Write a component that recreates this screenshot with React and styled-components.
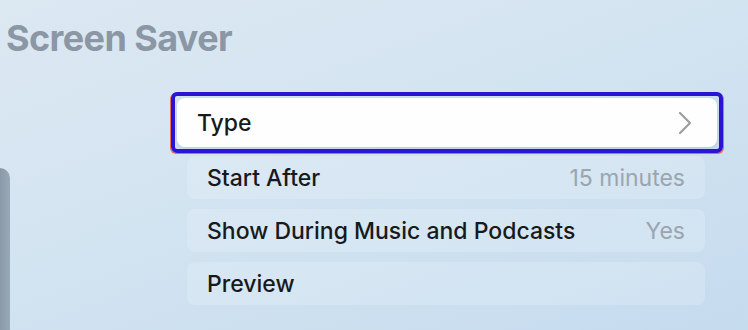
import React from 'react'
import styled, { createGlobalStyle } from 'styled-components'

const GlobalStyle = createGlobalStyle`
  html, body {
    margin: 0;
    padding: 0;
  }
  body {
    font-family: 'Inter', 'Liberation Sans', sans-serif;
  }
`

const Page = styled.div`
  width: 748px;
  height: 330px;
  overflow: hidden;
  background: linear-gradient(160deg, #dce8f2 0%, #d3e4f1 45%, #c5dbee 100%);
  display: grid;
  grid-template-rows: auto 1fr;
`

const Title = styled.h1`
  margin: 0;
  padding: 16px 0 0 6px;
  height: 76px;
  box-sizing: border-box;
  font-size: 36px;
  font-weight: 700;
  letter-spacing: -0.6px;
  color: #8b97a4;
`

const Body = styled.div`
  display: flex;
`

const Side = styled.div`
  width: 171px;
  flex-shrink: 0;
`

// edge of the Apple TV box peeking in from the left
const Device = styled.div`
  margin-top: 92px;
  width: 10px;
  height: 200px;
  background: linear-gradient(90deg, #8a9aa8, #97a8b6);
  border-top-right-radius: 14px;
`

const List = styled.ul`
  list-style: none;
  margin: 16px 0 0;
  padding: 0;
  width: 552px;
  display: flex;
  flex-direction: column;
  gap: 10px;
`

const Focus = styled.li`
  border: 4px solid #2b14d6;
  border-radius: 6px;
  padding: 2px;
  box-shadow: 1px 1px 0 #ea6f5f, -1px 1px 0 #ea6f5f;
  margin-bottom: -7px;
`

const FocusCard = styled.div`
  height: 49px;
  background: #fefefe;
  border-radius: 8px;
  display: flex;
  align-items: center;
  justify-content: space-between;
  padding: 0 24px 0 20px;
  box-shadow: 0 2px 6px rgba(60, 90, 120, 0.18);
`

const Row = styled.li`
  margin: 0 18px 0 16px;
  height: 43px;
  border-radius: 8px;
  background: rgba(232, 242, 250, 0.3);
  display: flex;
  align-items: center;
  justify-content: space-between;
  padding: 0 20px;
`

const Label = styled.span`
  font-size: 23px;
  font-weight: 500;
  color: #17191c;
`

const Value = styled.span`
  font-size: 23px;
  font-weight: 400;
  color: #9aa5af;
`

const Chevron = () => (
  <svg width="16" height="24" viewBox="0 0 16 24" fill="none">
    <path d="M3 2 L13 12 L3 22" stroke="#9a9ea3" strokeWidth="2.2" strokeLinecap="round" strokeLinejoin="round" />
  </svg>
)

const rows = [
  { label: 'Start After', value: '15 minutes' },
  { label: 'Show During Music and Podcasts', value: 'Yes' },
  { label: 'Preview' },
]

const App = () => {
  return (
    <Page>
      <GlobalStyle />
      <Title>Screen Saver</Title>
      <Body>
        <Side>
          <Device />
        </Side>
        <List>
          <Focus>
            <FocusCard>
              <Label>Type</Label>
              <Chevron />
            </FocusCard>
          </Focus>
          {rows.map((r) => (
            <Row key={r.label}>
              <Label>{r.label}</Label>
              {r.value && <Value>{r.value}</Value>}
            </Row>
          ))}
        </List>
      </Body>
    </Page>
  )
}

export default App
